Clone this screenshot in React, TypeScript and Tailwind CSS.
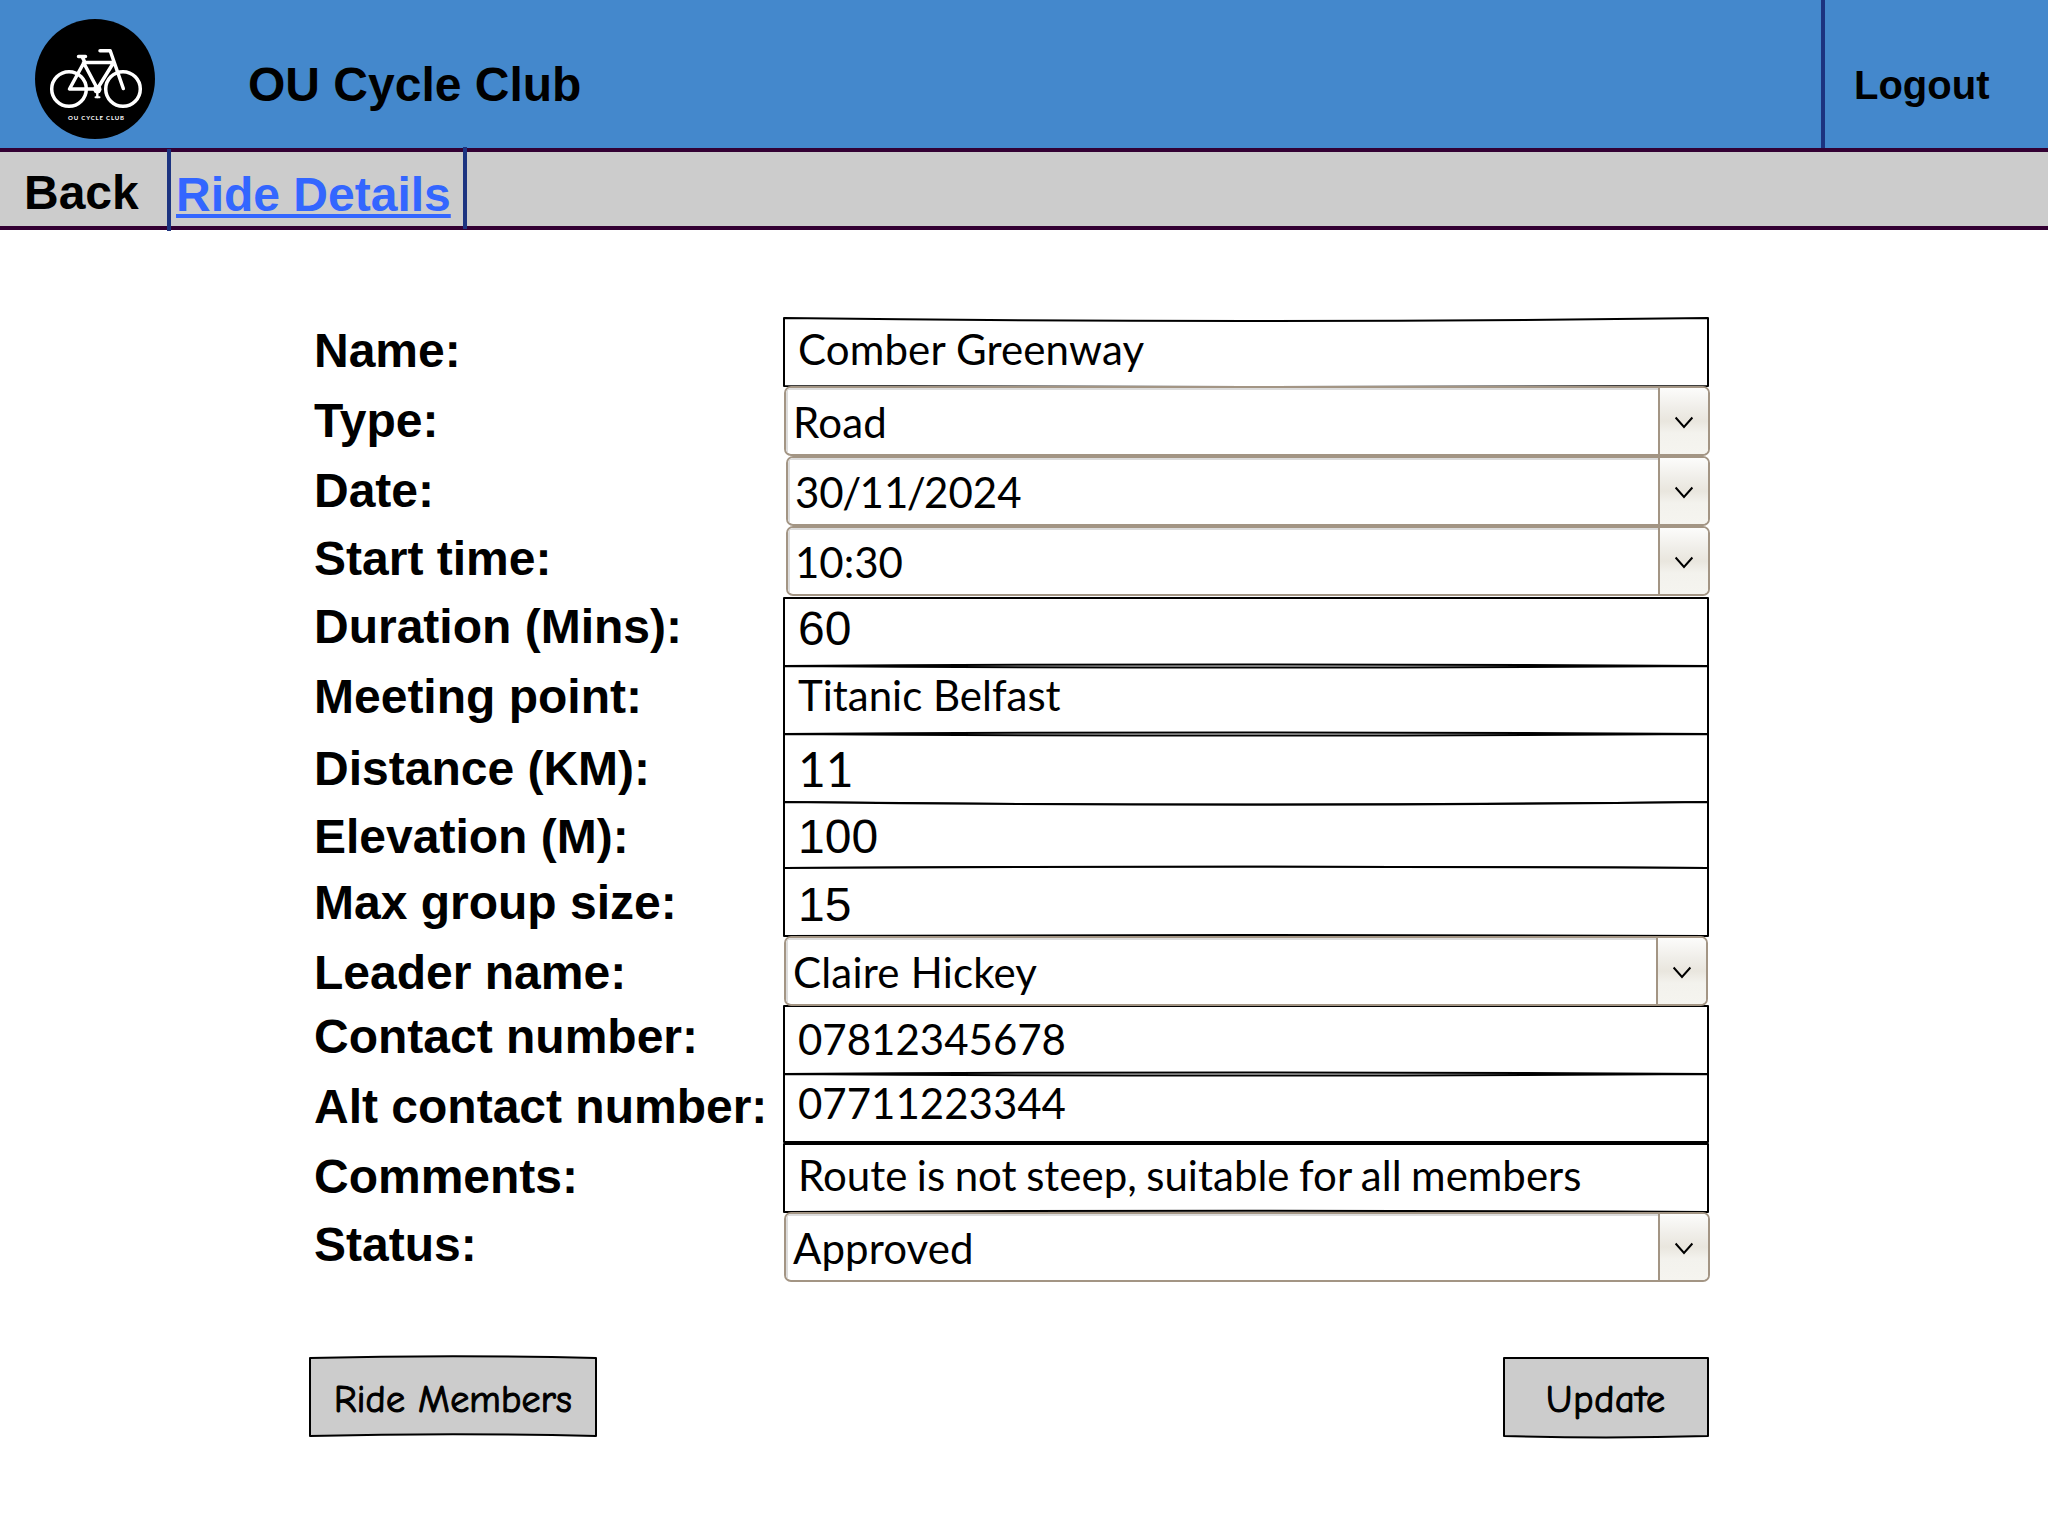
import React from "react";

type Kind = "text" | "select";

interface Row {
  label: string;
  value: string;
  kind: Kind;
  /** distance to the top of the next row */
  row: string;
  labelPad: string;
  field: string;
  valueClass: string;
  /** vertical bow of the hand-drawn top and bottom edges */
  bow?: [number, number];
}

const LATO = "font-['Lato',sans-serif] text-[42px] leading-[50px]";
const LATO_LG = "font-['Lato',sans-serif] text-5xl leading-[57px]";
const SANS = "font-['Liberation_Sans',sans-serif] text-5xl leading-[53px]";

const rows: Row[] = [
  { label: "Name:", value: "Comber Greenway", kind: "text", row: "h-[69px]", labelPad: "pt-[7px]", field: "h-[70px] w-[926px]", valueClass: `pt-[7px] tracking-[0.15px] ${LATO}`, bow: [3, 1] },
  { label: "Type:", value: "Road", kind: "select", row: "h-[70px]", labelPad: "pt-2", field: "ml-px h-[70px] w-[926px]", valueClass: `pt-[9px] pl-[7px] tracking-[0.2px] ${LATO}` },
  { label: "Date:", value: "30/11/2024", kind: "select", row: "h-[70px]", labelPad: "pt-2", field: "ml-[3px] h-[70px] w-[924px]", valueClass: `pt-[9px] pl-[7px] ${LATO}` },
  { label: "Start time:", value: "10:30", kind: "select", row: "h-[71px]", labelPad: "pt-1.5", field: "ml-[3px] h-[70px] w-[924px]", valueClass: `pt-[9px] pl-[7px] ${LATO}` },
  { label: "Duration (Mins):", value: "60", kind: "text", row: "h-[68px]", labelPad: "pt-[3px]", field: "h-[70px] w-[926px]", valueClass: `pt-[5px] ${SANS}`, bow: [0, -1.5] },
  { label: "Meeting point:", value: "Titanic Belfast", kind: "text", row: "h-[68px]", labelPad: "pt-[5px]", field: "h-[70px] w-[926px]", valueClass: `pt-[5px] ${LATO}`, bow: [1.5, -1.5] },
  { label: "Distance (KM):", value: "11", kind: "text", row: "h-[68px]", labelPad: "pt-[9px]", field: "h-[70px] w-[926px]", valueClass: `pt-[7px] ${LATO_LG}`, bow: [1.5, 2.5] },
  { label: "Elevation (M):", value: "100", kind: "text", row: "h-[66px]", labelPad: "pt-[9px]", field: "h-[68px] w-[926px]", valueClass: `pt-[9px] ${SANS}`, bow: [2.8, -1.3] },
  { label: "Max group size:", value: "15", kind: "text", row: "h-[69px]", labelPad: "pt-[9px]", field: "h-[70px] w-[926px]", valueClass: `pt-[11px] ${SANS}`, bow: [-1.3, -1] },
  { label: "Leader name:", value: "Claire Hickey", kind: "select", row: "h-[69px]", labelPad: "pt-[10px]", field: "ml-px h-[70px] w-[924px]", valueClass: `pt-[9px] pl-[7px] tracking-[0.2px] ${LATO}` },
  { label: "Contact number:", value: "07812345678", kind: "text", row: "h-[68px]", labelPad: "pt-[5px]", field: "h-[70px] w-[926px]", valueClass: `pt-[9px] ${LATO}`, bow: [0, -1.5] },
  { label: "Alt contact number:", value: "07711223344", kind: "text", row: "h-[70px]", labelPad: "pt-[7px]", field: "h-[70px] w-[926px]", valueClass: `pt-[5px] ${LATO}`, bow: [1.5, 0] },
  { label: "Comments:", value: "Route is not steep, suitable for all members", kind: "text", row: "h-[69px]", labelPad: "pt-[7px]", field: "h-[70px] w-[926px]", valueClass: `pt-[7px] [word-spacing:-1.2px] ${LATO}`, bow: [0, -1.2] },
  { label: "Status:", value: "Approved", kind: "select", row: "h-[71px]", labelPad: "pt-1.5", field: "ml-px h-[70px] w-[926px]", valueClass: `pt-[9px] pl-[7px] tracking-[0.1px] ${LATO}` },
];

/** Rectangle outline whose horizontal edges bend slightly, as if drawn by hand. */
function SketchFrame({ w, h, bow, fill }: { w: number; h: number; bow: [number, number]; fill: string }) {
  const [t, b] = bow;
  const r = w - 1;
  const m = h - 1;
  return (
    <svg className="absolute inset-0 size-full overflow-visible" viewBox={`0 0 ${w} ${h}`} aria-hidden="true">
      <path
        d={`M1 1Q${w / 2} ${1 + t * 2} ${r} 1L${r} ${m}Q${w / 2} ${m + b * 2} 1 ${m}Z`}
        fill={fill}
        stroke="#000"
        strokeWidth="2"
        strokeLinejoin="round"
      />
    </svg>
  );
}

/** Text with its slashes set tighter than the font's own spacing. */
function Value({ text }: { text: string }) {
  const parts = text.split("/");
  return (
    <>
      {parts.map((part, i) => (
        <React.Fragment key={i}>
          {i > 0 && <span className="-mx-[1.6px]">/</span>}
          {part}
        </React.Fragment>
      ))}
    </>
  );
}

function TextField({ row }: { row: Row }) {
  const h = row.field.includes("h-[68px]") ? 68 : 70;
  return (
    <div className={`relative shrink-0 ${row.field}`}>
      <SketchFrame w={926} h={h} bow={row.bow ?? [0, 0]} fill="#fff" />
      <div className={`relative whitespace-nowrap pl-[15px] ${row.valueClass}`}>{row.value}</div>
    </div>
  );
}

function SelectField({ row }: { row: Row }) {
  return (
    <div
      className={`relative z-10 flex shrink-0 overflow-hidden rounded-[7px] border-2 border-[#a39584] bg-white ${row.field}`}
    >
      <div className="min-w-0 flex-1 shadow-[inset_2px_2px_0_#dcdcdc]">
        <div className={`whitespace-nowrap ${row.valueClass}`}>
          <Value text={row.value} />
        </div>
      </div>
      <div className="flex w-[50px] items-start justify-center border-l-2 border-[#a39584] bg-[linear-gradient(#fcfcfb_0%,#f0eee9_30%,#e9e6de_50%,#f3f2ed_68%,#f5f4ef_100%)] pt-7">
        <svg className="h-[14px] w-5" viewBox="0 0 20 14" fill="none" stroke="#000" strokeWidth="2" aria-hidden="true">
          <path d="M1.6 1.5L10 11L18.4 1.5" />
        </svg>
      </div>
    </div>
  );
}

function Logo() {
  return (
    <svg className="mt-[19px] ml-[35px] size-[120px] shrink-0" viewBox="0 0 120 120" aria-label="OU Cycle Club">
      <circle cx="60" cy="60" r="60" fill="#000" />
      <g fill="none" stroke="#fff" strokeWidth="3.5" strokeLinecap="round" strokeLinejoin="round">
        <circle cx="34" cy="70" r="17.3" />
        <circle cx="88" cy="70" r="17.3" />
        <path d="M43.5 37.5H50.5M47.5 38.5L49.5 42.5L34.5 70H62M48.5 43.5L61.5 68M50 43.4H78M78 44.5L63.5 68M65 31.7H75.2L88.3 69.5" />
        <path d="M62.3 70V78" strokeWidth="2.4" />
        <path d="M60.5 78.3H64.5" strokeWidth="2" />
      </g>
      <circle cx="62.3" cy="70.3" r="4.2" fill="#fff" />
      <text
        x="33"
        y="101"
        textLength="56"
        fill="#fff"
        className="font-['Lato',sans-serif] text-[6px] font-bold"
      >
        OU CYCLE CLUB
      </text>
    </svg>
  );
}

function SketchButton({ label, w, size, bow, text }: { label: string; w: number; size: string; bow: [number, number]; text: string }) {
  return (
    <button type="button" className={`relative h-20 ${size}`}>
      <SketchFrame w={w} h={80} bow={bow} fill="#ccc" />
      <span
        className={`relative block whitespace-nowrap pt-1.5 font-['Comic_Neue','Comic_Sans_MS','Comic_Relief',cursive] [-webkit-text-stroke:1.1px_#000] ${text}`}
      >
        {label}
      </span>
    </button>
  );
}

export default function App() {
  return (
    <div className="h-[1536px] w-[2048px] overflow-hidden bg-white font-['Liberation_Sans',sans-serif] text-black">
      <header className="flex h-[152px] border-b-4 border-[#330033] bg-[#4488cc]">
        <Logo />
        <h1 className="mt-[58px] ml-[93px] text-5xl leading-[53px] font-bold">OU Cycle Club</h1>
        <div className="ml-auto h-full w-[227px] border-l-4 border-[#1c3380] pt-[62px] pl-[29px] text-[40px] leading-[46px] font-bold">
          Logout
        </div>
      </header>

      <nav className="flex h-[78px] border-b-4 border-[#330033] bg-[#cccccc] text-5xl leading-[53px] font-bold">
        <div className="w-[167px] pt-[14px] pl-6">Back</div>
        <div className="relative z-10 -mt-[3px] h-[82px] w-1 bg-[#1c3380]" />
        <div className="w-[292px] pt-4 pl-[5px] text-[#3366ff] underline decoration-4 underline-offset-[3px]">
          Ride Details
        </div>
        <div className="relative z-10 -mt-[5px] h-[82px] w-1 bg-[#1c3380]" />
      </nav>

      <main className="pt-[87px]">
        {rows.map((row) => (
          <div key={row.label} className={`flex pl-[314px] ${row.row}`}>
            <div className={`w-[469px] shrink-0 whitespace-nowrap text-5xl leading-[53px] font-bold ${row.labelPad}`}>
              {row.label}
            </div>
            {row.kind === "text" ? <TextField row={row} /> : <SelectField row={row} />}
          </div>
        ))}
        <div className="mt-[74px] flex justify-between pr-[339px] pl-[309px]">
          <SketchButton label="Ride Members" w={288} size="w-[288px]" bow={[-1.7, -1.7]} text="text-[38px] tracking-[0.2px]" />
          <SketchButton label="Update" w={206} size="w-[206px]" bow={[0, 1.4]} text="text-[38px] tracking-[0.8px]" />
        </div>
      </main>
    </div>
  );
}
